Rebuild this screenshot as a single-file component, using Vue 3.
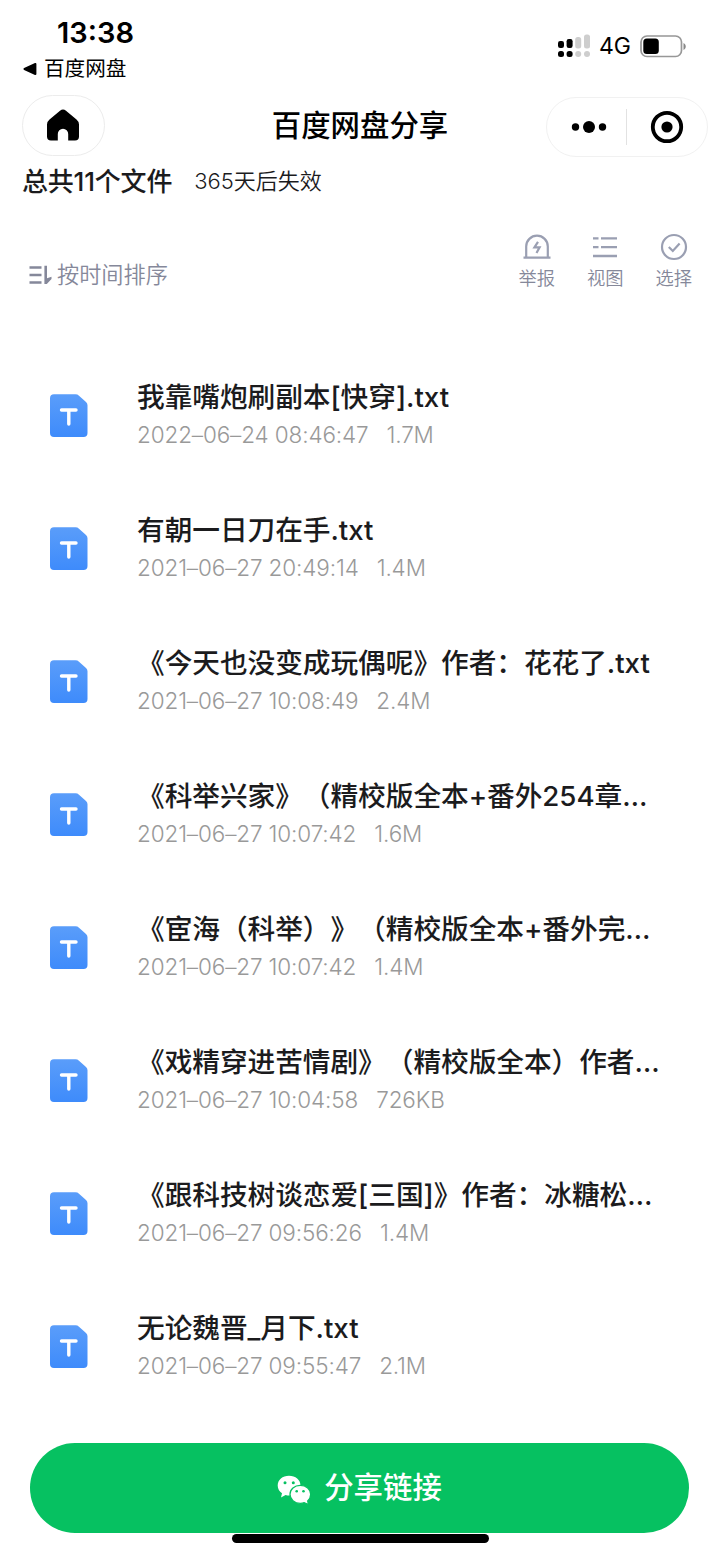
<template>
  <div class="page">
    <div class="status">
      <div class="statusLeft">
        <div class="time">13:38</div>
        <div class="backApp">
          <svg class="backArrow" viewBox="0 0 14 12"><path d="M1.500 6 12.400 1v10z" fill="#000" stroke="#000" stroke-width="2" stroke-linejoin="round" /></svg>
          <span>百度网盘</span>
        </div>
      </div>
      <div class="statusRight">
        <svg class="signal" viewBox="0 0 33 24">
          <g fill="#000">
            <rect x="1" y="7" width="6" height="7" rx="2.200" />
            <rect x="9.600" y="5" width="6" height="9" rx="2.200" />
            <rect x="1" y="17" width="6" height="6" rx="2.500" />
            <rect x="9.600" y="17" width="6" height="6" rx="2.500" />
          </g>
          <g fill="#cecece">
            <rect x="18.200" y="3" width="6" height="11.500" rx="2.500" />
            <rect x="27" y="0.500" width="6" height="14" rx="2.500" />
            <circle cx="21.200" cy="20" r="3" />
            <circle cx="30" cy="20" r="3" />
          </g>
        </svg>
        <span class="network">4G</span>
        <svg class="battery" viewBox="0 0 47 23">
          <rect x="1" y="1" width="40.500" height="20.500" rx="6" fill="none" stroke="#979797" stroke-width="1.700" />
          <rect x="3.300" y="3.500" width="15.500" height="15.500" rx="3.500" fill="#000" />
          <path d="M43.500 8v7c3-1.500 3-5.500 0-7z" fill="#888" />
        </svg>
      </div>
    </div>

    <div class="nav">
      <div class="homeButton">
        <svg viewBox="0 0 34 32"><path d="M14 1.700Q17-.6 20 1.700L30.500 10.500Q33 12.600 33 15.500V27.500Q33 31.500 29 31.500H22.200V25a5.200 5.200 0 0 0-10.400 0v6.500H5Q1 31.500 1 27.500V15.500Q1 12.600 3.500 10.500z" fill="#000" /></svg>
      </div>
      <div class="navTitle">百度网盘分享</div>
      <div class="capsule">
        <svg class="dots" viewBox="0 0 36 14"><circle cx="4.500" cy="7" r="3.700" /><circle cx="18" cy="7" r="6" /><circle cx="31.500" cy="7" r="3.700" /></svg>
        <div class="line"></div>
        <svg class="target" viewBox="0 0 34 34"><circle cx="17" cy="17" r="14.200" fill="none" stroke="#000" stroke-width="3.800" /><circle cx="17" cy="17" r="5.600" /></svg>
      </div>
    </div>

    <div class="summary">
      <span class="total">总共11个文件</span>
      <span class="expire">365天后失效</span>
    </div>

    <div class="toolbar">
      <div class="sort">
        <svg viewBox="0 0 24 20" fill="none" stroke="#85889a" stroke-width="2.500"><path d="M1.500 2.500h12M1.500 10h12M1.500 17.500h12" /><path d="M16.400.8H19v12.400l4.500-1.500v2.200L18.800 19h-2.400z" fill="#85889a" stroke="none" /></svg>
        <span>按时间排序</span>
      </div>
      <div class="actions">
        <div class="action">
          <svg viewBox="0 0 28 28" fill="none" stroke="#9a9fb2" stroke-width="2.200"><path d="M3.200 24V13.500a10.800 10.800 0 0 1 21.600 0V24M.5 24.700h27" /><path d="M15 8.800l-3.600 5.600h5.200L13.500 20" /></svg>
          <span>举报</span>
        </div>
        <div class="action">
          <svg viewBox="0 0 28 28" fill="none" stroke="#9a9fb2" stroke-width="2.300"><path d="M2 5.400h5.500M10 5.400h16M2 14.200h5.500M10 14.200h16M2 23h24" /></svg>
          <span>视图</span>
        </div>
        <div class="action">
          <svg viewBox="0 0 28 28" fill="none" stroke="#9a9fb2" stroke-width="2.200"><circle cx="14" cy="14" r="12" /><path d="M8.800 14l4 4 6.800-7.500" /></svg>
          <span>选择</span>
        </div>
      </div>
    </div>

    <div class="files">
      <div class="file" v-for="file in files" :key="file.name">
        <svg class="fileIcon" viewBox="0 0 38 44">
          <defs>
            <linearGradient id="fileBlue" x1="0" y1="0" x2="0" y2="1">
              <stop offset="0" stop-color="#5a9dfa" />
              <stop offset="1" stop-color="#3e8bfb" />
            </linearGradient>
          </defs>
          <path d="M4 .3H25.500Q27.500.3 29 1.700L36 7.900Q37.500 9.300 37.500 11.300V39Q37.500 43 33.500 43H4Q0 43 0 39V4.300Q0 .3 4 .3z" fill="url(#fileBlue)" />
          <path d="M11.500 16H26M18.800 16V30" stroke="#fff" stroke-width="3.400" stroke-linecap="round" fill="none" />
        </svg>
        <div class="info">
          <div class="name">{{ file.name }}</div>
          <div class="meta"><span>{{ file.date }}</span><span>{{ file.size }}</span></div>
        </div>
      </div>
    </div>

    <div class="share">
      <svg viewBox="0 0 34 30">
        <path d="M12 .8C5.500.8.700 5 .700 10.500c0 3.200 1.600 6 4.300 7.800L4 22.500l4.600-2.500q1.700.5 3.800.5C19 20.500 23.500 16 23.500 10.500S18.500.8 12 .8z" fill="#fff" />
        <path d="M23.300 10.300c-5.900 0-10.300 4-10.300 9s4.400 9.100 10.300 9.100c1.400 0 2.800-.2 3.900-.7l4.300 1.800-.8-3.600c1.900-1.700 3-3.900 3-6.600 0-5-4.500-9-10.400-9z" fill="#fff" stroke="#06c161" stroke-width="1.300" />
        <g fill="#06c161"><circle cx="8" cy="7.800" r="1.500" /><circle cx="16.300" cy="7.800" r="1.500" /><circle cx="19.700" cy="16.300" r="1.300" /><circle cx="26.500" cy="16.300" r="1.300" /></g>
      </svg>
      <span>分享链接</span>
    </div>
    <div class="homeBar"></div>
  </div>
</template>

<script setup>
const files = [
  { name: "我靠嘴炮刷副本[快穿].txt", date: "2022–06–24 08:46:47", size: "1.7M" },
  { name: "有朝一日刀在手.txt", date: "2021–06–27 20:49:14", size: "1.4M" },
  { name: "《今天也没变成玩偶呢》作者：花花了.txt", date: "2021–06–27 10:08:49", size: "2.4M" },
  { name: "《科举兴家》（精校版全本+番外254章…", date: "2021–06–27 10:07:42", size: "1.6M" },
  { name: "《宦海（科举）》（精校版全本+番外完…", date: "2021–06–27 10:07:42", size: "1.4M" },
  { name: "《戏精穿进苦情剧》（精校版全本）作者…", date: "2021–06–27 10:04:58", size: "726KB" },
  { name: "《跟科技树谈恋爱[三国]》作者：冰糖松…", date: "2021–06–27 09:56:26", size: "1.4M" },
  { name: "无论魏晋_月下.txt", date: "2021–06–27 09:55:47", size: "2.1M" },
];
</script>

<style>
body {
  background: #fff;
}
</style>

<style scoped>
.page {
  width: 720px;
  height: 1558px;
  overflow: hidden;
  display: flex;
  flex-direction: column;
  box-sizing: border-box;
  background: #fff;
  color: #1b1b1d;
  font-family: Inter, "Noto Sans CJK SC", sans-serif;
  text-spacing-trim: space-all;
  white-space: nowrap;
}
svg {
  display: block;
  flex: none;
}
.status {
  height: 95px;
  display: flex;
  justify-content: space-between;
  color: #000;
}
.time {
  margin: 16px 0 0 57px;
  font-size: 29px;
  line-height: 34px;
  font-weight: 600;
}
.backApp {
  display: flex;
  align-items: center;
  gap: 7px;
  margin: 4px 0 0 23px;
  font-size: 20.600px;
  line-height: 30px;
}
.backArrow {
  width: 14px;
  height: 12px;
}
.statusRight {
  display: flex;
  align-items: center;
  height: 24px;
  margin: 34px 33px 0 0;
}
.signal {
  width: 33px;
  height: 24px;
}
.network {
  margin: 0 9px 0 9px;
  font-size: 23px;
}
.battery {
  width: 47px;
  height: 23px;
}
.nav {
  height: 62px;
  display: flex;
  align-items: flex-start;
  justify-content: space-between;
  padding: 0 12px 0 22px;
}
.homeButton {
  width: 83px;
  height: 61px;
  box-sizing: border-box;
  border: 1px solid #ececec;
  border-radius: 31px;
  display: flex;
  align-items: center;
  justify-content: center;
}
.homeButton svg {
  width: 34px;
  height: 32px;
  margin: 0 2px 2px 0;
}
.navTitle {
  margin: 8px 0 0 69px;
  font-size: 29.400px;
  line-height: 46px;
  font-weight: 500;
  color: #000;
}
.capsule {
  width: 162px;
  height: 60px;
  margin-top: 2px;
  box-sizing: border-box;
  border: 1px solid #f1f1f1;
  border-radius: 30px;
  display: flex;
  align-items: center;
  padding-left: 24px;
}
.dots {
  width: 36px;
  height: 14px;
}
.line {
  width: 1px;
  height: 36px;
  margin: 0 23px 0 19px;
  background: #e2e2e2;
}
.target {
  width: 34px;
  height: 34px;
}
.summary {
  display: flex;
  align-items: center;
  gap: 22px;
  height: 44px;
  margin-bottom: 4px;
  padding-left: 22px;
}
.total {
  font-size: 26px;
  font-weight: 500;
  letter-spacing: -0.2px;
}
.expire {
  font-size: 22px;
  font-weight: 350;
}
.toolbar {
  height: 90px;
  display: flex;
  justify-content: space-between;
  padding: 28px 24px 0 28px;
  color: #85889a;
  font-weight: 350;
  box-sizing: border-box;
}
.sort {
  display: flex;
  align-items: flex-start;
  gap: 5px;
  height: 32px;
  margin-top: 26px;
  font-size: 22.200px;
  line-height: 32px;
}
.sort svg {
  width: 24px;
  height: 20px;
  margin-top: 6px;
}
.actions {
  display: flex;
  gap: 24px;
}
.action {
  width: 44.500px;
  display: flex;
  flex-direction: column;
  align-items: center;
  font-size: 18.300px;
  line-height: 26px;
}
.action svg {
  width: 28px;
  height: 28px;
  margin-bottom: 4px;
}
.files {
  margin-top: 54px;
}
.file {
  height: 133px;
  display: flex;
  align-items: center;
  gap: 49px;
  padding-left: 50px;
  box-sizing: border-box;
}
.fileIcon {
  width: 38px;
  height: 44px;
}
.info {
  padding-bottom: 4px;
}
.name {
  font-size: 27.700px;
  line-height: 40px;
  font-weight: 500;
  letter-spacing: -0.05px;
}
.meta {
  display: flex;
  gap: 18px;
  margin-top: 2px;
  font-size: 22.500px;
  line-height: 32px;
  font-weight: 300;
  letter-spacing: -0.13px;
  color: #999;
}
.share {
  height: 90px;
  margin: 30px 31px 0 30px;
  border-radius: 45px;
  background: #06c161;
  color: #fff;
  display: flex;
  flex: none;
  align-items: center;
  justify-content: center;
  gap: 13px;
  font-size: 29.400px;
  line-height: 44px;
  font-weight: 500;
}
.share svg {
  width: 34px;
  height: 30px;
  margin-top: 3px;
}
.homeBar {
  flex: none;
  width: 257px;
  height: 9px;
  margin-top: 1px;
  margin-left: 232px;
  border-radius: 5px;
  background: #000;
}
</style>
